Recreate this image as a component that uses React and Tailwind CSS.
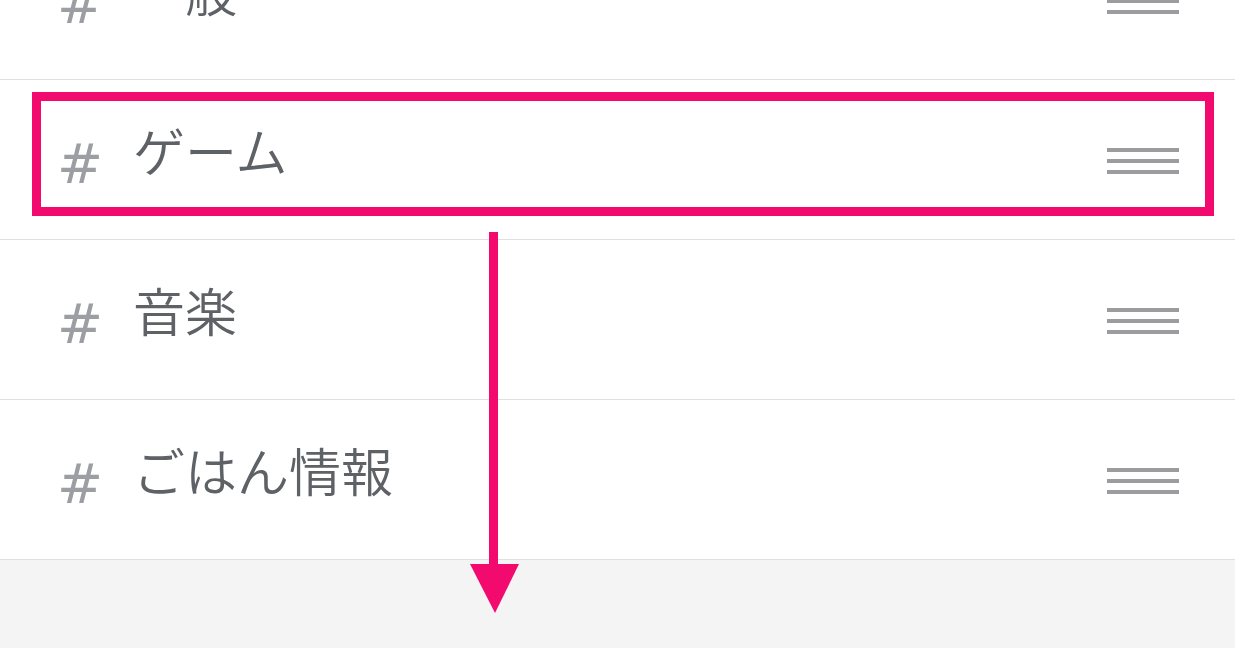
const CHANNELS = ['一般', 'ゲーム', '音楽', 'ごはん情報'];

const DragHandle = () => (
  <div className="flex flex-col gap-[7px] w-[72px]">
    <span className="block h-[4px] bg-[#9c9c9e]" />
    <span className="block h-[4px] bg-[#9c9c9e]" />
    <span className="block h-[4px] bg-[#9c9c9e]" />
  </div>
);

const ChannelRow = ({ name }) => (
  <div className="flex items-start h-[160px] bg-white border-b border-[#dfdfe1]">
    <span
      className="ml-[57px] mt-[57px] text-[55px] leading-none text-[#9c9ea3] w-[76px]"
      style={{ fontFamily: '"DejaVu Sans", sans-serif' }}
    >
      #
    </span>
    <span
      className="mt-[44px] text-[52px] font-[350] leading-none text-[#5e6166]"
      style={{ fontFamily: '"Noto Sans CJK JP", sans-serif' }}
    >
      {name}
    </span>
    <div className="ml-auto mr-[56px] mt-[68px]">
      <DragHandle />
    </div>
  </div>
);

export default function App() {
  return (
    <div className="relative h-[648px] w-[1235px] overflow-hidden bg-[#f4f4f5]">
      <div className="-mt-[80px]">
        {CHANNELS.map((name) => (
          <ChannelRow key={name} name={name} />
        ))}
      </div>

      {/* highlight around the dragged row */}
      <div className="absolute left-[32px] top-[92px] w-[1182px] h-[124px] border-[9px] border-[#f20a6f]" />

      {/* drop direction arrow */}
      <svg
        className="absolute left-[468px] top-[230px]"
        width="54"
        height="386"
        viewBox="0 0 54 386"
      >
        <rect x="21" y="2" width="9" height="338" fill="#f20a6f" />
        <polygon points="2,334 51,334 27,383" fill="#f20a6f" />
      </svg>
    </div>
  );
}
